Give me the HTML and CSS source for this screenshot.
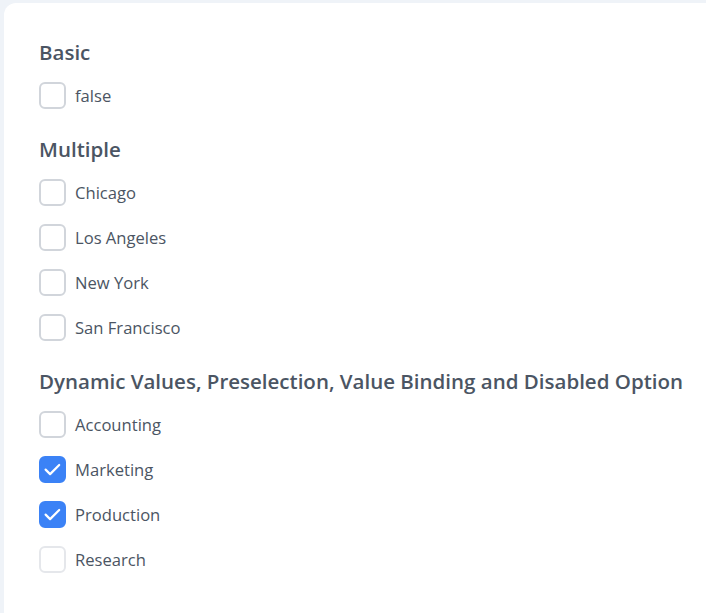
FILE: index.html
```html
<!DOCTYPE html>
<html lang="en">
<head>
<meta charset="utf-8">
<title>Checkbox</title>
<link rel="stylesheet" href="styles.css">
</head>
<body>
<div class="card">
  <section class="section">
    <h5 class="title">Basic</h5>
    <label class="row"><span class="box"></span><span class="label">false</span></label>
  </section>
  <section class="section">
    <h5 class="title">Multiple</h5>
    <label class="row"><span class="box"></span><span class="label">Chicago</span></label>
    <label class="row"><span class="box"></span><span class="label">Los Angeles</span></label>
    <label class="row"><span class="box"></span><span class="label">New York</span></label>
    <label class="row"><span class="box"></span><span class="label">San Francisco</span></label>
  </section>
  <section class="section">
    <h5 class="title">Dynamic Values, Preselection, Value Binding and Disabled Option</h5>
    <label class="row"><span class="box"></span><span class="label">Accounting</span></label>
    <label class="row"><span class="box checked"><svg class="check" viewBox="0 0 23 23"><path d="M4.6 11.6 L9.1 16.1 L18.2 7" fill="none" stroke="#fff" stroke-width="2.2" stroke-linecap="round" stroke-linejoin="round"/></svg></span><span class="label">Marketing</span></label>
    <label class="row"><span class="box checked"><svg class="check" viewBox="0 0 23 23"><path d="M4.6 11.6 L9.1 16.1 L18.2 7" fill="none" stroke="#fff" stroke-width="2.2" stroke-linecap="round" stroke-linejoin="round"/></svg></span><span class="label">Production</span></label>
    <label class="row disabled"><span class="box"></span><span class="label">Research</span></label>
  </section>
</div>
</body>
</html>
```
FILE: styles.css
```css
html, body {
  margin: 0;
  height: 100%;
}
body {
  background: #eff3f8;
  padding: 3px 0 0 4px;
  box-sizing: border-box;
  font-family: "Open Sans", "Noto Sans", sans-serif;
  color: #4b5563;
  overflow: hidden;
}
.card {
  background: #ffffff;
  border-radius: 12px 0 0 0;
  padding: 35px 0 40px 35px;
  min-height: 700px;
  display: flex;
  flex-direction: column;
  gap: 26px;
}
.section {
  display: flex;
  flex-direction: column;
  gap: 18px;
}
.title {
  margin: 0 0 -2px;
  font-size: 20.5px;
  line-height: 28px;
  font-weight: 600;
  color: #4b5563;
  white-space: nowrap;
}
.row {
  display: flex;
  align-items: center;
  gap: 9px;
  height: 27px;
}
.box {
  width: 27px;
  height: 27px;
  box-sizing: border-box;
  border: 2px solid #d1d5db;
  border-radius: 6px;
  background: #fff;
  flex: none;
}
.check {
  display: block;
  width: 23px;
  height: 23px;
}
.box.checked {
  background: #3b82f6;
  border-color: #3b82f6;
}
.disabled .box {
  border-color: #e5e7eb;
}
.label {
  font-size: 16.6px;
  line-height: 24px;
  color: #4b5563;
}
```
